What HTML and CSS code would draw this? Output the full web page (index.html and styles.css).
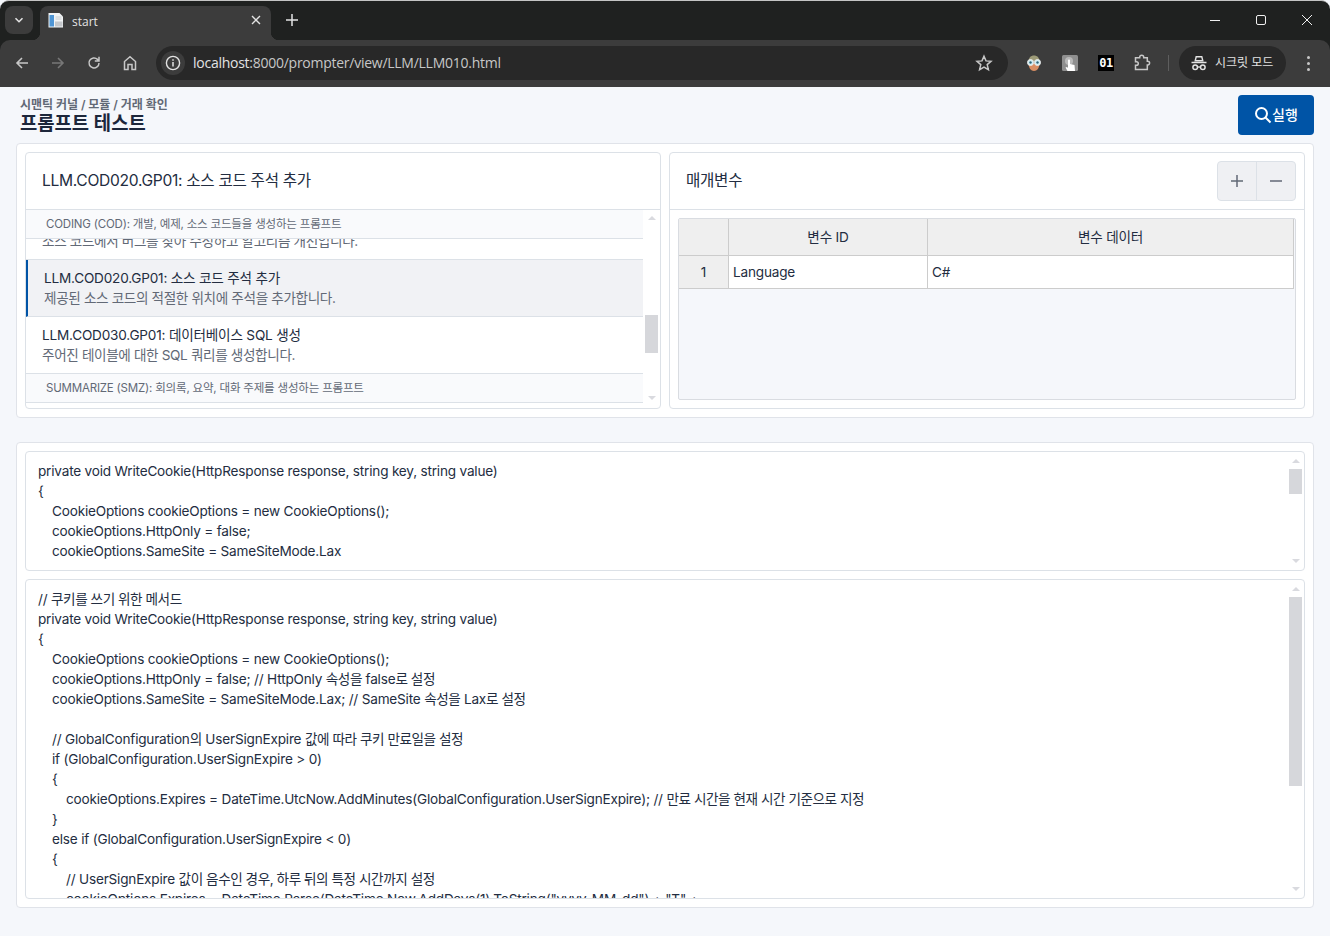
FILE: index.html
```html
<!DOCTYPE html>
<html lang="ko">
<head>
<meta charset="utf-8">
<title>start</title>
<link rel="stylesheet" href="styles.css">
</head>
<body>
<div class="browser">
  <div class="tabstrip">
    <div class="tablist-btn"><svg width="12" height="12" viewBox="0 0 12 12"><path d="M2.500 4.200 6 7.700l3.500-3.500" fill="none" stroke="#e3e3e3" stroke-width="1.600"/></svg></div>
    <div class="tab">
      <svg class="favicon" width="16" height="16" viewBox="0 0 16 16"><path d="M0.500 1h11l3.500 3.500V15.500H0.500z" fill="#f1f3f5"/><rect x="1.500" y="3" width="4.500" height="11.500" fill="#4f95d4"/><rect x="7" y="9.500" width="7.500" height="5" fill="#c4c7cb"/><path d="M7.500 5h6M7.500 7h6" stroke="#c9ccd0"/></svg>
      <span class="tab-title">start</span>
      <svg class="tab-close" width="10" height="10" viewBox="0 0 10 10"><path d="M1 1l8 8M9 1l-8 8" stroke="#e3e3e3" stroke-width="1.400"/></svg>
    </div>
    <svg class="newtab" width="12" height="12" viewBox="0 0 12 12"><path d="M6 0v12M0 6h12" stroke="#e3e3e3" stroke-width="1.500"/></svg>
    <div class="winctl">
      <svg width="46" height="12" viewBox="0 0 46 12"><path d="M18 6.500h10" stroke="#f0f0f0"/></svg>
      <svg width="46" height="12" viewBox="0 0 46 12"><rect x="18.500" y="1.500" width="9" height="9" rx="1.500" fill="none" stroke="#f0f0f0"/></svg>
      <svg width="46" height="12" viewBox="0 0 46 12"><path d="M18 1l10 10M28 1 18 11" stroke="#f0f0f0"/></svg>
    </div>
  </div>
  <div class="toolbar">
    <div class="navbtn"><svg width="16" height="16" viewBox="0 0 16 16"><path d="M14 8H3M8 3 3 8l5 5" fill="none" stroke="#c7c7c7" stroke-width="1.600"/></svg></div>
    <div class="navbtn"><svg width="16" height="16" viewBox="0 0 16 16"><path d="M2 8h11M8 3l5 5-5 5" fill="none" stroke="#777" stroke-width="1.600"/></svg></div>
    <div class="navbtn"><svg width="16" height="16" viewBox="0 0 16 16"><path d="M13 8a5 5 0 1 1-1.500-3.600L13 6M13 1.800V6H8.800" fill="none" stroke="#c7c7c7" stroke-width="1.500"/></svg></div>
    <div class="navbtn"><svg width="16" height="16" viewBox="0 0 16 16"><path d="M2.500 14.500V6.500L8 1.800l5.500 4.700v8h-3.500V9.500H6v5z" fill="none" stroke="#c7c7c7" stroke-width="1.500"/></svg></div>
    <div class="omnibox">
      <div class="info-chip"><svg width="16" height="16" viewBox="0 0 16 16"><circle cx="8" cy="8" r="6.600" fill="none" stroke="#e3e3e3" stroke-width="1.400"/><path d="M8 7v4.500M8 4.200v1.600" stroke="#e3e3e3" stroke-width="1.500"/></svg></div>
      <div class="url"><span class="url-host">localhost</span>:8000/prompter/view/LLM/LLM010.html</div>
      <svg class="star" width="18" height="18" viewBox="0 0 18 18"><path d="M9 2.200l2 4.700 5 .4-3.800 3.300 1.200 5L9 13l-4.400 2.600 1.200-5L2 7.300l5-.4z" fill="none" stroke="#c7c7c7" stroke-width="1.500"/></svg>
    </div>
    <div class="ext ext-first">
      <svg width="18" height="18" viewBox="0 0 18 18"><path d="M3.500 9c0 5 2.500 8 5.500 8s5.500-3 5.500-8z" fill="#d98e63"/><path d="M3.500 8C3.500 3.500 6 1.500 9 1.500s5.500 2 5.500 6.500z" fill="#9d9b78"/><circle cx="5.500" cy="8.500" r="3" fill="#cfeef4" stroke="#e9e9e9"/><circle cx="12.500" cy="8.500" r="3" fill="#cfeef4" stroke="#e9e9e9"/><circle cx="5.500" cy="8.500" r="1.200" fill="#2f6479"/><circle cx="12.500" cy="8.500" r="1.200" fill="#2f6479"/></svg>
    </div>
    <div class="ext">
      <svg width="16" height="16" viewBox="0 0 16 16"><rect width="16" height="16" rx="1.500" fill="#8f8f8f"/><circle cx="7" cy="6" r="4" fill="#b9b9b9"/><path d="M5.500 16l-2-3.500 1.500-.5 1 1V5.500c0-1.400 2-1.400 2 0V9l4.500 1 .5 6z" fill="#fff"/></svg>
    </div>
    <div class="ext"><span class="badge01">01</span></div>
    <div class="ext">
      <svg width="18" height="18" viewBox="-0.500 0 18 18"><path d="M2 3.800h4.200V3.200a2 2 0 0 1 4 0v.6h3.600v3.500h.5a1.800 1.800 0 0 1 0 3.600h-.5V15.500H2V11.300h1a1.800 1.800 0 0 0 0-3.600H2z" fill="none" stroke="#c7c7c7" stroke-width="1.500"/></svg>
    </div>
    <div class="tb-sep"></div>
    <div class="incognito">
      <svg width="18" height="18" viewBox="0 0 18 18"><path d="M6.200 2.800h5.600l1 4H5.200z" fill="none" stroke="#e3e3e3" stroke-width="1.400"/><path d="M1.500 8.500h15" stroke="#e3e3e3" stroke-width="1.500"/><circle cx="5.200" cy="13.200" r="2.300" fill="none" stroke="#e3e3e3" stroke-width="1.500"/><circle cx="12.800" cy="13.200" r="2.300" fill="none" stroke="#e3e3e3" stroke-width="1.500"/><path d="M7.500 13h3" stroke="#e3e3e3" stroke-width="1.300"/></svg>
      <span>시크릿 모드</span>
    </div>
    <div class="menu-btn"><i></i><i></i><i></i></div>
  </div>
</div>

<div class="page">
  <header class="page-header">
    <div>
      <div class="breadcrumb">시맨틱 커널 / 모듈 / 거래 확인</div>
      <h1 class="page-title">프롬프트 테스트</h1>
    </div>
    <button class="btn-run">
      <svg width="18" height="18" viewBox="0 0 18 18"><circle cx="7.500" cy="7.500" r="5.500" fill="none" stroke="#fff" stroke-width="2"/><path d="M11.500 11.500l5 5" stroke="#fff" stroke-width="2"/></svg>
      <span>실행</span>
    </button>
  </header>

  <section class="panel panel-top">
    <div class="card">
      <div class="card-header"><h3 class="card-title">LLM.COD020.GP01: 소스 코드 주석 추가</h3></div>
      <div class="list-wrap">
        <div class="list-sub">CODING (COD): 개발, 예제, 소스 코드들을 생성하는 프롬프트</div>
        <div class="list-item clipped"><div class="item-desc">소스 코드에서 버그를 찾아 수정하고 알고리즘 개선입니다.</div></div>
        <div class="list-item active">
          <div class="item-title">LLM.COD020.GP01: 소스 코드 주석 추가</div>
          <div class="item-desc">제공된 소스 코드의 적절한 위치에 주석을 추가합니다.</div>
        </div>
        <div class="list-item">
          <div class="item-title">LLM.COD030.GP01: 데이터베이스 SQL 생성</div>
          <div class="item-desc">주어진 테이블에 대한 SQL 쿼리를 생성합니다.</div>
        </div>
        <div class="list-sub">SUMMARIZE (SMZ): 회의록, 요약, 대화 주제를 생성하는 프롬프트</div>
        <div class="sb sb-list"><i class="up"></i><b></b><i class="down"></i></div>
      </div>
    </div>
    <div class="card">
      <div class="card-header">
        <h3 class="card-title">매개변수</h3>
        <div class="btn-group">
          <span class="gbtn"><svg width="14" height="14" viewBox="0 0 14 14"><path d="M7 1v12M1 7h12" stroke="#626976" stroke-width="1.500"/></svg></span>
          <span class="gbtn"><svg width="14" height="14" viewBox="0 0 14 14"><path d="M1 7h12" stroke="#626976" stroke-width="1.500"/></svg></span>
        </div>
      </div>
      <div class="grid-wrap">
        <div class="grid">
          <table>
            <thead><tr><th class="c0"></th><th class="c1">변수 ID</th><th class="c2">변수 데이터</th></tr></thead>
            <tbody><tr><th>1</th><td>Language</td><td>C#</td></tr></tbody>
          </table>
        </div>
      </div>
    </div>
  </section>

  <section class="panel panel-bottom">
    <div class="code code-in">
      <div>private void WriteCookie(HttpResponse response, string key, string value)</div>
      <div>{</div>
      <div class="l1">CookieOptions cookieOptions = new CookieOptions();</div>
      <div class="l1">cookieOptions.HttpOnly = false;</div>
      <div class="l1">cookieOptions.SameSite = SameSiteMode.Lax</div>
      <div class="sb sb-in"><i class="up"></i><b></b><i class="down"></i></div>
    </div>
    <div class="code code-out">
      <div>// <span class="ko">쿠키를 쓰기 위한 메서드</span></div>
      <div>private void WriteCookie(HttpResponse response, string key, string value)</div>
      <div>{</div>
      <div class="l1">CookieOptions cookieOptions = new CookieOptions();</div>
      <div class="l1">cookieOptions.HttpOnly = false; // HttpOnly <span class="ko">속성을</span> false<span class="ko">로 설정</span></div>
      <div class="l1">cookieOptions.SameSite = SameSiteMode.Lax; // SameSite <span class="ko">속성을</span> Lax<span class="ko">로 설정</span></div>
      <div class="blank"></div>
      <div class="l1">// GlobalConfiguration<span class="ko">의</span> UserSignExpire <span class="ko">값에 따라 쿠키 만료일을 설정</span></div>
      <div class="l1">if (GlobalConfiguration.UserSignExpire &gt; 0)</div>
      <div class="l1">{</div>
      <div class="l2">cookieOptions.Expires = DateTime.UtcNow.AddMinutes(GlobalConfiguration.UserSignExpire); // <span class="ko">만료 시간을 현재 시간 기준으로 지정</span></div>
      <div class="l1">}</div>
      <div class="l1">else if (GlobalConfiguration.UserSignExpire &lt; 0)</div>
      <div class="l1">{</div>
      <div class="l2">// UserSignExpire <span class="ko">값이 음수인 경우, 하루 뒤의 특정 시간까지 설정</span></div>
      <div class="l2">cookieOptions.Expires = DateTime.Parse(DateTime.Now.AddDays(1).ToString("yyyy-MM-dd") + "T" +</div>
      <div class="sb sb-out"><i class="up"></i><b></b><i class="down"></i></div>
    </div>
  </section>
</div>
</body>
</html>
```
FILE: styles.css
```css
* { box-sizing: border-box; }
html, body { margin: 0; height: 100%; }
body {
  height: 936px;
  overflow: hidden;
  display: flex;
  flex-direction: column;
  background: #f5f7fb;
  font-family: Inter, "Noto Sans CJK KR", sans-serif;
  font-size: 13.6px;
  letter-spacing: -0.2px;
  line-height: 20px;
  color: #232d41;
}
.browser {
  flex: none;
  font-family: "Open Sans", "Noto Sans CJK KR", sans-serif;
  letter-spacing: 0;
  color: #e3e3e3;
  background: #1f2120;
  border-top: 1px solid #c4c4c4;
  border-radius: 9px 9px 0 0;
}
.tabstrip {
  height: 39px;
  display: flex;
  align-items: flex-start;
  padding: 5px 0 0 5px;
}
.tablist-btn {
  width: 28px; height: 28px;
  background: #3c3c3c;
  border-radius: 8px;
  display: flex; align-items: center; justify-content: center;
}
.tab {
  width: 231px; height: 34px;
  margin-left: 7px;
  background: #3c3c3c;
  border-radius: 8px 8px 0 0;
  display: flex; align-items: center;
  padding: 0 10px 0 8px;
  position: relative;
}
.tab::before, .tab::after {
  content: "";
  position: absolute;
  bottom: 0;
  width: 8px; height: 8px;
}
.tab::before { left: -8px; background: radial-gradient(circle at 0 0, transparent 8px, #3c3c3c 8.5px); }
.tab::after { right: -8px; background: radial-gradient(circle at 100% 0, transparent 8px, #3c3c3c 8.5px); }
.favicon { flex: none; margin-top: -6px; }
.tab-title { margin: -3px 0 0 8px; font-size: 12px; flex: 1; }
.tab-close { flex: none; margin-top: -6px; }
.newtab { margin: 8px 0 0 15px; flex: none; }
.winctl { margin-left: auto; display: flex; padding-top: 8px; }
.winctl svg { display: block; }
.toolbar {
  height: 47px;
  background: #3c3c3c;
  border-radius: 10px 10px 0 0;
  display: flex;
  align-items: center;
  padding-left: 4px;
  padding-bottom: 1px;
}
.navbtn { width: 36px; height: 34px; display: flex; align-items: center; justify-content: center; flex: none; }
.omnibox {
  width: 852px; height: 34px;
  margin-left: 8px;
  background: #282828;
  border-radius: 17px;
  display: flex; align-items: center;
  padding: 0 15px 0 5px;
}
.info-chip {
  width: 24px; height: 24px; border-radius: 50%;
  background: #3c3c3c;
  display: flex; align-items: center; justify-content: center;
  flex: none;
}
.url { margin-left: 8px; font-size: 14px; letter-spacing: -0.26px; color: #c7c7c7; flex: 1; white-space: nowrap; }
.url-host { color: #e3e3e3; }
.star { flex: none; }
.ext { width: 36px; height: 34px; display: flex; align-items: center; justify-content: center; flex: none; }
.ext-first { margin-left: 8px; }
.badge01 {
  width: 16px; height: 16px; background: #000; color: #fff;
  font: bold 12px/16px "DejaVu Sans Mono", monospace;
  text-align: center;
  letter-spacing: -0.5px;
}
.tb-sep { width: 1px; height: 16px; background: #5e5e5e; margin: 0 10px 0 8px; flex: none; }
.incognito {
  width: 107px; height: 34px;
  background: #282828;
  border-radius: 17px;
  display: flex; align-items: center;
  gap: 7px;
  padding-left: 11px;
  font-size: 12px;
  flex: none;
}
.menu-btn { width: 44px; display: flex; flex-direction: column; align-items: center; gap: 3px; flex: none; }
.menu-btn i { width: 3px; height: 3px; border-radius: 50%; background: #c7c7c7; display: block; }

.page { flex: 1; padding: 0 16px; min-height: 0; }
.page-header {
  height: 56px;
  display: flex;
  justify-content: space-between;
  align-items: center;
  padding-left: 4px;
}
.breadcrumb { font-size: 12px; line-height: 14px; font-weight: 600; letter-spacing: -0.05px; color: #626976; margin-top: 3px; }
.page-title { margin: 1px 0 0; font-size: 18.800px; line-height: 22px; font-weight: 600; letter-spacing: 0; color: #1d273b; }
.btn-run {
  width: 76px; height: 40px;
  border: 0;
  border-radius: 4px;
  background: #0054a6;
  color: #fff;
  font: 500 14px/20px Inter, "Noto Sans CJK KR", sans-serif;
  display: flex; align-items: center; justify-content: center;
  padding: 0;
}
.panel {
  background: #fff;
  border: 1px solid #e0e3e9;
  border-radius: 4px;
  padding: 8px;
}
.panel-top { height: 275px; display: grid; grid-template-columns: 1fr 1fr; gap: 8px; }
.panel-bottom { height: 466px; margin-top: 24px; display: flex; flex-direction: column; gap: 8px; }
.card {
  border: 1px solid #dce1e7;
  border-radius: 4px;
  display: flex; flex-direction: column;
  min-height: 0;
  overflow: hidden;
  background: #fff;
}
.card-header {
  height: 57px; flex: none;
  display: flex; align-items: center; justify-content: space-between;
  padding: 0 8px 0 16px;
  border-bottom: 1px solid #dce1e7;
}
.card-title { margin: 0; font-size: 15.600px; font-weight: 400; line-height: 20px; letter-spacing: -0.3px; }
.list-wrap { flex: 1; position: relative; min-height: 0; overflow: hidden; padding-right: 17px; }
.list-sub {
  height: 29px;
  padding: 4px 20px 0;
  font-size: 11.500px; line-height: 20px;
  letter-spacing: -0.19px;
  color: #626976;
  background: #f9fafc;
  border-bottom: 1px solid #dce1e7;
}
.list-item {
  padding: 8px 16px;
  height: 57px;
  border-bottom: 1px solid #dce1e7;
  overflow: hidden;
}
.list-item.clipped { height: 21px; padding-top: 0; display: flex; flex-direction: column; justify-content: flex-end; }
.list-item.active { background: #f1f2f5; border-left: 2px solid #0054a6; }
.item-desc { color: #626976; white-space: nowrap; flex: none; letter-spacing: -0.36px; }
.item-title { white-space: nowrap; }
.sb { position: absolute; width: 13px; display: flex; flex-direction: column; align-items: center; }
.sb i { display: block; width: 0; height: 0; border-left: 4px solid transparent; border-right: 4px solid transparent; flex: none; }
.sb .up { border-bottom: 4px solid #d9dadf; }
.sb .down { border-top: 4px solid #d9dadf; margin-top: auto; }
.sb b { display: block; width: 13px; background: #d6d7db; flex: none; }
.sb-list { right: 2px; top: 6px; height: 184px; }
.sb-list b { margin-top: 95px; height: 38px; }
.btn-group { display: flex; border: 1px solid #dce1e7; border-radius: 4px; background: #eff0f3; height: 40px; }
.gbtn { width: 38px; display: flex; align-items: center; justify-content: center; }
.gbtn + .gbtn { width: 39px; border-left: 1px solid #dce1e7; }
.grid-wrap { flex: 1; padding: 8px; min-height: 0; }
.grid { height: 182px; background: #f5f7fb; border: 1px solid #d9dce1; border-radius: 2px; overflow: hidden; }
table { border-collapse: collapse; table-layout: fixed; width: 615px; margin: -1px 0 0 -1px; }
.c0 { width: 50px; }
.c1 { width: 199px; }
.c2 { width: 366px; }
th, td { border: 1px solid #ccc; font-weight: 400; padding: 0 4px; }
thead th { height: 37px; background: #efefef; text-align: center; }
tbody th { background: #efefef; text-align: center; }
tbody td { background: #fff; height: 33px; text-align: left; }
.code {
  position: relative;
  border: 1px solid #dce1e7;
  border-radius: 4px;
  padding: 9px 12px;
  white-space: nowrap;
  overflow: hidden;
  background: #fff;
}
.code-in { height: 120px; flex: none; }
.code-out { height: 320px; flex: none; }
.ko { letter-spacing: -0.45px; }
.l1 { padding-left: 14px; }
.l2 { padding-left: 28px; }
.blank { height: 20px; }
.sb-in { right: 2px; top: 7px; height: 104px; }
.sb-in b { margin-top: 6px; height: 25px; }
.sb-out { right: 2px; top: 7px; height: 304px; }
.sb-out b { margin-top: 6px; height: 189px; }
```
